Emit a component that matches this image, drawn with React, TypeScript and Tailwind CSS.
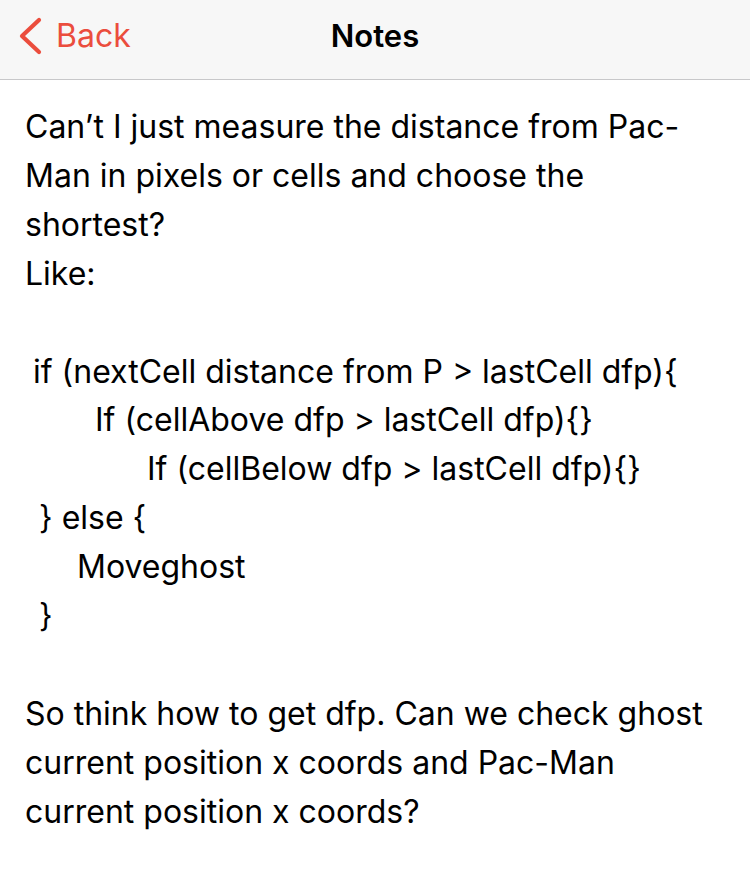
export default function App() {
  const intro = [
    'Can\u2019t I just measure the distance from Pac-',
    'Man in pixels or cells and choose the',
    'shortest?',
    'Like:',
  ];

  const code: { text: string; indent: string }[] = [
    { text: 'if (nextCell distance from P > lastCell dfp){', indent: 'pl-[8px]' },
    { text: 'If (cellAbove dfp > lastCell dfp){}', indent: 'pl-[70px]' },
    { text: 'If (cellBelow dfp > lastCell dfp){}', indent: 'pl-[122px]' },
    { text: '} else {', indent: 'pl-[14px]' },
    { text: 'Moveghost', indent: 'pl-[52px]' },
    { text: '}', indent: 'pl-[14px]' },
  ];

  const outro = [
    'So think how to get dfp. Can we check ghost',
    'current position x coords and Pac-Man',
    'current position x coords?',
  ];

  return (
    <div className="min-h-[870px] w-[750px] bg-white font-['Inter',sans-serif] text-black">
      {/* Nav bar */}
      <div className="relative flex h-[80px] items-center border-b border-[#c8c8ca] bg-[#f7f7f7] pb-[8px]">
        <button className="flex items-center gap-[14px] pl-[18px] text-[#eb4d3d]">
          <svg width="24" height="38" viewBox="0 0 24 38" fill="none">
            <path d="M21 3 L4 19 L21 35" stroke="currentColor" strokeWidth="4.2" strokeLinecap="round" strokeLinejoin="round" />
          </svg>
          <span className="text-[32px] leading-none">Back</span>
        </button>
        <h1 className="absolute left-1/2 top-[20px] -translate-x-1/2 text-[31px] font-semibold leading-none">Notes</h1>
      </div>

      {/* Note body */}
      <div className="px-[25px] pt-[23px] text-[32px] leading-[48.9px]">
        {intro.map((l) => (
          <div key={l}>{l}</div>
        ))}
        <div className="h-[48.9px]" />
        {code.map((c) => (
          <div key={c.text} className={c.indent}>{c.text}</div>
        ))}
        <div className="h-[48.9px]" />
        {outro.map((l) => (
          <div key={l}>{l}</div>
        ))}
      </div>
    </div>
  );
}
